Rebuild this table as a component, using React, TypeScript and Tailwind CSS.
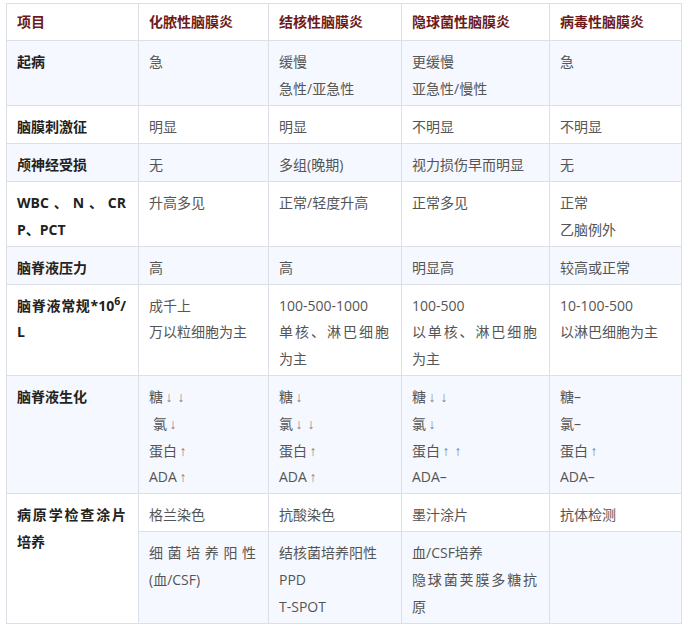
import React from "react";

const font = "font-['Open_Sans','Noto_Sans_CJK_SC',sans-serif]";

const headers = ["项目", "化脓性脑膜炎", "结核性脑膜炎", "隐球菌性脑膜炎", "病毒性脑膜炎"];

function Arrow({ c }: { c: string }) {
    return (
        <span className="inline-block w-[12px] text-center font-['Liberation_Sans',sans-serif] text-[#7d838f]">
            {c}
        </span>
    );
}

function Lines({ items }: { items: React.ReactNode[] }) {
    return (
        <>
            {items.map((t, i) => (
                <div key={i}>{t}</div>
            ))}
        </>
    );
}

const td = "border border-[#dcdfe6] pl-[10px] pr-[12px] pt-2 pb-[2.2px] align-top text-justify";
const th = "border border-[#dcdfe6] pl-[10px] pr-[12px] pt-[6px] pb-[6px] leading-[24px] text-left font-bold text-[#6e1a1a]";
const first = "font-bold text-[#222]";

export default function App() {
    const blue = "bg-[#f5f8fe]";

    return (
        <div className={`pt-[3px] pl-[6px] bg-white min-h-screen ${font} text-[14px] leading-[26.8px] text-[#555]`}>
            <table className="table-fixed border-collapse w-[675px]">
                <colgroup>
                    <col className="w-[132px]" />
                    <col className="w-[130px]" />
                    <col className="w-[133px]" />
                    <col className="w-[148px]" />
                    <col className="w-[132px]" />
                </colgroup>
                <thead>
                    <tr className="bg-white">
                        {headers.map((h) => (
                            <th key={h} className={th}>
                                {h}
                            </th>
                        ))}
                    </tr>
                </thead>
                <tbody>
                    <tr className={blue}>
                        <td className={`${td} ${first}`}>起病</td>
                        <td className={td}>急</td>
                        <td className={td}>
                            <Lines items={["缓慢", "急性/亚急性"]} />
                        </td>
                        <td className={td}>
                            <Lines items={["更缓慢", "亚急性/慢性"]} />
                        </td>
                        <td className={td}>急</td>
                    </tr>
                    <tr className="bg-white">
                        <td className={`${td} ${first}`}>脑膜刺激征</td>
                        <td className={td}>明显</td>
                        <td className={td}>明显</td>
                        <td className={td}>不明显</td>
                        <td className={td}>不明显</td>
                    </tr>
                    <tr className={blue}>
                        <td className={`${td} ${first}`}>颅神经受损</td>
                        <td className={td}>无</td>
                        <td className={td}>多组(晚期)</td>
                        <td className={td}>视力损伤早而明显</td>
                        <td className={td}>无</td>
                    </tr>
                    <tr className="bg-white">
                        <td className={`${td} ${first} break-all`}>WBC、N、CRP、PCT</td>
                        <td className={td}>升高多见</td>
                        <td className={td}>正常/轻度升高</td>
                        <td className={td}>正常多见</td>
                        <td className={td}>
                            <Lines items={["正常", "乙脑例外"]} />
                        </td>
                    </tr>
                    <tr className={blue}>
                        <td className={`${td} ${first}`}>脑脊液压力</td>
                        <td className={td}>高</td>
                        <td className={td}>高</td>
                        <td className={td}>明显高</td>
                        <td className={td}>较高或正常</td>
                    </tr>
                    <tr className="bg-white">
                        <td className={`${td} ${first} break-all`}>
                            脑脊液常规*10<sup>6</sup>/L
                        </td>
                        <td className={td}>
                            <Lines items={["成千上", "万以粒细胞为主"]} />
                        </td>
                        <td className={td}>
                            <Lines items={["100-500-1000", "单核、淋巴细胞为主"]} />
                        </td>
                        <td className={td}>
                            <Lines items={["100-500", "以单核、淋巴细胞为主"]} />
                        </td>
                        <td className={td}>
                            <Lines items={["10-100-500", "以淋巴细胞为主"]} />
                        </td>
                    </tr>
                    <tr className={blue}>
                        <td className={`${td} ${first}`}>脑脊液生化</td>
                        <td className={td}>
                            <Lines
                                items={[
                                    <>糖<Arrow c="↓" /><Arrow c="↓" /></>,
                                    <span className="pl-[4px]">氯<Arrow c="↓" /></span>,
                                    <>蛋白<Arrow c="↑" /></>,
                                    <>ADA<Arrow c="↑" /></>,
                                ]}
                            />
                        </td>
                        <td className={td}>
                            <Lines
                                items={[
                                    <>糖<Arrow c="↓" /></>,
                                    <>氯<Arrow c="↓" /><Arrow c="↓" /></>,
                                    <>蛋白<Arrow c="↑" /></>,
                                    <>ADA<Arrow c="↑" /></>,
                                ]}
                            />
                        </td>
                        <td className={td}>
                            <Lines
                                items={[
                                    <>糖<Arrow c="↓" /><Arrow c="↓" /></>,
                                    <>氯<Arrow c="↓" /></>,
                                    <>蛋白<Arrow c="↑" /><Arrow c="↑" /></>,
                                    <>ADA–</>,
                                ]}
                            />
                        </td>
                        <td className={td}>
                            <Lines items={["糖–", "氯–", <>蛋白<Arrow c="↑" /></>, "ADA–"]} />
                        </td>
                    </tr>
                    <tr className="bg-white">
                        <td rowSpan={2} className={`${td} ${first}`}>
                            病原学检查涂片培养
                        </td>
                        <td className={td}>格兰染色</td>
                        <td className={td}>抗酸染色</td>
                        <td className={td}>墨汁涂片</td>
                        <td className={td}>抗体检测</td>
                    </tr>
                    <tr className={blue}>
                        <td className={td}>细菌培养阳性(血/CSF)</td>
                        <td className={td}>
                            <Lines items={["结核菌培养阳性", "PPD", "T-SPOT"]} />
                        </td>
                        <td className={td}>
                            <Lines items={["血/CSF培养", "隐球菌荚膜多糖抗原"]} />
                        </td>
                        <td className={td}></td>
                    </tr>
                </tbody>
            </table>
        </div>
    );
}
